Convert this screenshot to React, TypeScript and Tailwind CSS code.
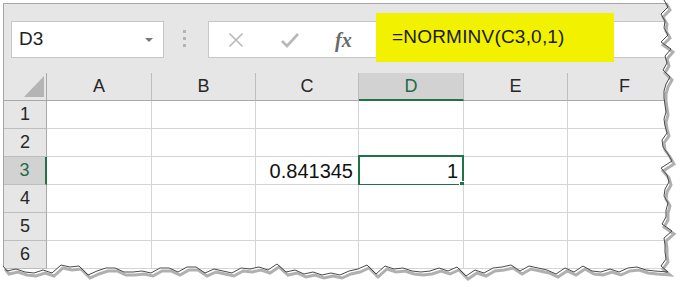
import React from "react";

function rng(seed: number) {
  let s = seed;
  return () => {
    s = (s * 9301 + 49297) % 233280;
    return s / 233280;
  };
}

function tornPath() {
  const r = rng(7);
  const pts: [number, number][] = [];
  // right edge, top to bottom
  for (let y = 0; y <= 266; y += 7) {
    const x = 660 + r() * 9 + (Math.floor(y / 7) % 2 === 0 ? 0 : 3);
    pts.push([Math.round(x), y]);
  }
  pts.push([668, 272]);
  // bottom edge, right to left
  for (let x = 655; x >= 3; x -= 9) {
    const y = 264 + r() * 9 + (Math.floor(x / 9) % 2 === 0 ? 0 : 3);
    pts.push([x, Math.round(y)]);
  }
  pts.push([3, 266]);
  return pts;
}

const PTS = tornPath();

function TornEdge() {
  const line = PTS.map((p, i) => `${i === 0 ? "M" : "L"}${p[0]},${p[1]}`).join(" ");
  const fill = `M682,0 L${PTS[0][0]},0 ` + PTS.map((p) => `L${p[0]},${p[1]}`).join(" ") + " L0,266 L0,287 L682,287 Z";
  return (
    <svg className="absolute left-0 top-0" width={682} height={287} viewBox="0 0 682 287">
      <path d={fill} fill="#ffffff" />
      <path d={line} fill="none" stroke="#b0b0b0" strokeWidth={3} transform="translate(2,3)" />
      <path d={line} fill="none" stroke="#4a4a4a" strokeWidth={1} />
    </svg>
  );
}

const cols = ["A", "B", "C", "D", "E", "F"];
const rows = [1, 2, 3, 4, 5, 6];

const font = { fontFamily: '"Liberation Sans", Arial, sans-serif' };

export default function App() {
  return (
    <div className="relative w-[682px] h-[287px] bg-white overflow-hidden" style={font}>
      <div className="ml-[3px] mt-[3px] border-l border-t border-[#a6a6a6] h-[284px]">
        {/* toolbar */}
        <div className="h-[69px] bg-[#e6e6e6] flex items-start pt-[17px]">
          <div className="ml-[7px] w-[153px] h-[37px] bg-white border border-[#c6c6c6] flex items-center justify-between pl-[7px] pr-[10px]">
            <span className="text-[19px] text-[#222]">D3</span>
            <svg width="8" height="4" viewBox="0 0 8 4"><path d="M0,0 L8,0 L4,4 Z" fill="#777" /></svg>
          </div>
          <div className="ml-[19px] mt-[9px] flex flex-col gap-[4px]">
            <div className="w-[3px] h-[3px] bg-[#b3b3b3]" />
            <div className="w-[3px] h-[3px] bg-[#b3b3b3]" />
            <div className="w-[3px] h-[3px] bg-[#b3b3b3]" />
          </div>
          <div className="relative ml-[22px] flex-1 h-[37px] bg-white border border-[#c6c6c6] flex items-center">
            <svg className="ml-[19px]" width="16" height="16" viewBox="0 0 16 16">
              <path d="M1.5,1.5 L14.5,14.5 M14.5,1.5 L1.5,14.5" stroke="#b8b8b8" strokeWidth="1.6" fill="none" />
            </svg>
            <svg className="ml-[37px]" width="18" height="16" viewBox="0 0 18 16">
              <path d="M1,9 L6,14 L17,2" stroke="#b8b8b8" strokeWidth="2.6" fill="none" />
            </svg>
            <span className="ml-[36px] text-[20px] italic font-bold text-[#6a6a6a]" style={{ fontFamily: '"Liberation Serif", "Times New Roman", serif' }}>
              fx
            </span>
            <div className="absolute left-[167px] top-[-9px] w-[238px] h-[49px] bg-[#f2f200] flex items-center pl-[16px]">
              <span className="text-[19px] text-[#1a1a1a] tracking-[0.2px]">=NORMINV(C3,0,1)</span>
            </div>
          </div>
        </div>
        {/* grid */}
        <div className="grid grid-cols-[43px_105px_104px_103px_105px_104px_1fr] auto-rows-[28px]">
          <div className="relative bg-[#e6e6e6] border-r border-b border-[#a8a8a8]">
            <svg className="absolute right-[2px] bottom-[3px]" width="20" height="21" viewBox="0 0 20 21">
              <path d="M20,0 L20,21 L0,21 Z" fill="#b4b4b4" />
            </svg>
          </div>
          {cols.map((c) => (
            <div
              key={c}
              className={
                c === "D"
                  ? "bg-[#d2d2d2] border-r border-[#bdbdbd] border-b-2 border-b-[#217346] flex items-center justify-center text-[18px] text-[#1f6b45]"
                  : "bg-[#e6e6e6] border-r border-b border-[#bdbdbd] border-b-[#a8a8a8] flex items-center justify-center text-[18px] text-[#262626]"
              }
            >
              {c}
            </div>
          ))}
          {rows.map((r) => (
            <React.Fragment key={r}>
              <div
                className={
                  r === 3
                    ? "bg-[#d2d2d2] border-b border-[#bdbdbd] border-r-2 border-r-[#217346] flex items-center justify-center text-[18px] text-[#1f6b45]"
                    : "bg-[#e6e6e6] border-b border-[#bdbdbd] border-r border-r-[#a8a8a8] flex items-center justify-center text-[18px] text-[#262626]"
                }
              >
                {r}
              </div>
              {cols.map((c) => (
                <div key={c} className="relative bg-white border-r border-b border-[#d4d4d4] flex items-center justify-end pr-[5px] text-[20px] text-[#111]">
                  {r === 3 && c === "C" ? <span className="pt-[1px]">0.841345</span> : null}
                  {r === 3 && c === "D" ? (
                    <>
                      <span className="pt-[1px]">1</span>
                      <div className="absolute left-[-1px] top-[-2px] right-[-1px] bottom-[-2px] border-2 border-[#217346]" />
                      <div className="absolute right-[-3px] bottom-[-4px] w-[7px] h-[7px] bg-[#217346] border border-white" />
                    </>
                  ) : null}
                </div>
              ))}
            </React.Fragment>
          ))}
        </div>
      </div>
      <TornEdge />
    </div>
  );
}
